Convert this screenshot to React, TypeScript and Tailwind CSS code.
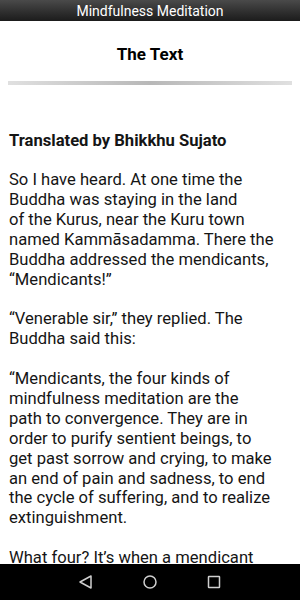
import React from "react";

export default function App() {
  const paras: string[][] = [
    [
      "So I have heard. At one time the",
      "Buddha was staying in the land",
      "of the Kurus, near the Kuru town",
      "named Kammāsadamma. There the",
      "Buddha addressed the mendicants,",
      "“Mendicants!”",
    ],
    ["“Venerable sir,” they replied. The", "Buddha said this:"],
    [
      "“Mendicants, the four kinds of",
      "mindfulness meditation are the",
      "path to convergence. They are in",
      "order to purify sentient beings, to",
      "get past sorrow and crying, to make",
      "an end of pain and sadness, to end",
      "the cycle of suffering, and to realize",
      "extinguishment.",
    ],
    ["What four? It’s when a mendicant"],
  ];
  return (
    <div
      className="w-[300px] h-[600px] flex flex-col bg-white overflow-hidden"
      style={{ fontFamily: "Roboto, 'Noto Sans', sans-serif" }}
    >
      <div className="h-[21px] shrink-0 flex items-center justify-center bg-gradient-to-b from-[#4a4a4a] to-[#1c1c1c] text-white text-[14px] leading-none">
        Mindfulness Meditation
      </div>
      <div className="flex-1 overflow-hidden">
        <div className="pt-[25px] flex justify-center">
          <h1 className="text-[17px] font-bold text-black leading-[17px]">The Text</h1>
        </div>
        <div className="mx-[8px] mt-[18px] h-[4px] bg-gradient-to-r from-[#e0e0e0] via-[#b8b8b8] to-[#e0e0e0]" />
        <div className="px-[9px] pt-[46px] text-[#151515] text-[16.6px] leading-[19.9px]">
          <p className="font-bold mb-[19px] leading-[20px] whitespace-nowrap">Translated by Bhikkhu Sujato</p>
          {paras.map((p, i) => (
            <p key={i} className="mb-[19.9px]">
              {p.map((l, j) => (
                <span key={j} className="block whitespace-nowrap">
                  {l}
                </span>
              ))}
            </p>
          ))}
        </div>
      </div>
      <div className="h-[36px] shrink-0 bg-black flex items-center justify-center gap-[44px]">
        <svg width="20" height="20" viewBox="0 0 20 20" fill="none">
          <path d="M15 4 L4 10 L15 16 Z" stroke="#cfcfcf" strokeWidth="1.5" strokeLinejoin="round" />
        </svg>
        <svg width="20" height="20" viewBox="0 0 20 20" fill="none">
          <circle cx="10" cy="10" r="6" stroke="#cfcfcf" strokeWidth="1.5" />
        </svg>
        <svg width="20" height="20" viewBox="0 0 20 20" fill="none">
          <rect x="4.5" y="4.5" width="11" height="11" rx="0.5" stroke="#cfcfcf" strokeWidth="1.5" />
        </svg>
      </div>
    </div>
  );
}
